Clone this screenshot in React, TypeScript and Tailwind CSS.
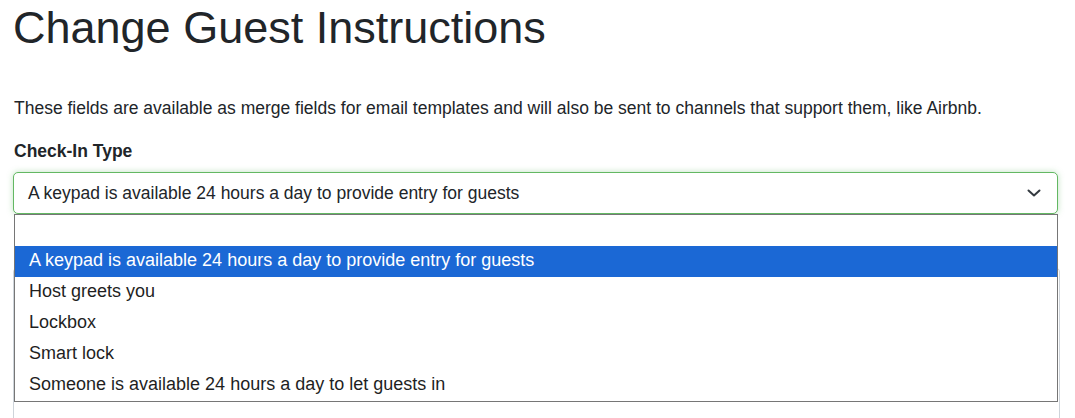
import { useState } from "react";

const options = [
  "",
  "A keypad is available 24 hours a day to provide entry for guests",
  "Host greets you",
  "Lockbox",
  "Smart lock",
  "Someone is available 24 hours a day to let guests in",
];

const Chevron = () => (
  <svg width="14" height="8" viewBox="0 0 14 8" fill="none" className="shrink-0">
    <path d="M1.5 1.5 7 6.5l5.5-5" stroke="#343a40" strokeWidth="2" strokeLinecap="round" strokeLinejoin="round" />
  </svg>
);

export default function App() {
  const [selected] = useState(1);

  return (
    <div className="min-h-screen bg-white text-[#212529] pl-[13px] pr-[17px] pt-px" style={{ fontFamily: "'Liberation Sans', Arial, sans-serif" }}>
      <h1 className="text-[45px] leading-[1.2] font-normal">Change Guest Instructions</h1>
      <p className="mt-[40px] text-[17.5px] leading-[26px] pl-px">
        These fields are available as merge fields for email templates and will also be sent to channels that support them, like Airbnb.
      </p>
      <label className="block mt-[17px] text-[17.5px] leading-[26px] font-bold pl-px">Check-In Type</label>

      <div className="relative mt-[8px]">
        <div className="flex items-center justify-between h-[42px] rounded-[5px] border border-[#63b863] shadow-[0_0_6px_rgba(76,175,80,0.35)] bg-white pl-[14px] pr-[16px]">
          <span className="text-[17.5px] leading-[26px]">{options[selected]}</span>
          <Chevron />
        </div>

        <div className="absolute top-[42px] left-px right-0 z-10 border border-[#767676] bg-white">
          {options.map((o, i) => (
            <div
              key={i}
              className={`h-[31px] pt-[3px] pb-[6px] pl-[14px] text-[18px] leading-[22px] whitespace-nowrap ${i === selected ? "bg-[#1b68d5] text-white" : "text-[#1f1f1f]"}`}
            >
              {o}
            </div>
          ))}
        </div>

        <div className="mt-[10px] text-[17.5px] leading-[26px] font-bold pl-px">Check-In Instructions</div>
        <div className="mt-[17px] -mr-[2px] h-[160px] rounded-[5px] border border-[#ced4da] bg-white" />
      </div>
    </div>
  );
}
